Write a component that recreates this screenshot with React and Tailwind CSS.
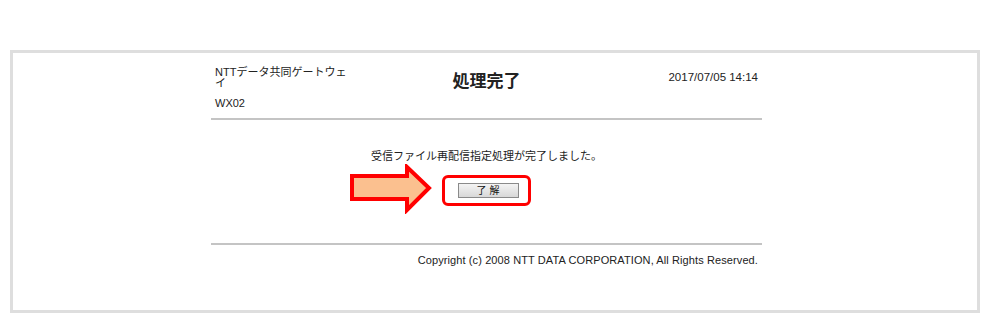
const FONT = "font-['Liberation_Sans','Noto_Sans_CJK_JP',sans-serif]";

function Arrow() {
  return (
    <svg
      width="84"
      height="50"
      viewBox="0 0 84 50"
      className="absolute left-[-95px] top-[-14px]"
    >
      <path
        d="M2 12 H57 V3 L79 24 L57 46 V35 H2 Z"
        fill="#fbc08f"
        stroke="#ff0000"
        strokeWidth="4"
        strokeLinejoin="miter"
      />
    </svg>
  );
}

export default function App() {
  return (
    <div className={`min-h-screen bg-white text-[#222] ${FONT}`}>
      <div className="pt-[50px] pl-[10px]">
        <div className="w-[970px] h-[263px] border-[3px] border-[#dedede]">
          <div className="ml-[198px] w-[551px] pt-[14px]">
            {/* header */}
            <div className="flex items-start">
              <div className="w-[180px] pl-1">
                <div className="w-[136px] text-[11px] leading-[11px]">
                  NTTデータ共同ゲートウェイ
                </div>
                <div className="mt-[9px] text-[11px] leading-[11px]">WX02</div>
              </div>
              <div className="flex-1 pt-[5px] text-center text-[17px] font-bold leading-[20px]">
                処理完了
              </div>
              <div className="w-[180px] pt-[5px] pr-1 text-right text-[11.5px] leading-[11px]">
                2017/07/05 14:14
              </div>
            </div>

            <div className="mt-[9px] h-[2px] bg-[#c4c4c4]" />

            <div className="mt-[29px] text-center text-[11px] leading-[14px]">
              受信ファイル再配信指定処理が完了しました。
            </div>

            <div className="mt-[12px] flex justify-center">
              <div className="relative flex h-[31px] w-[89px] items-center justify-center rounded-[6px] border-[3px] border-[#ff0000] pl-[3px]">
                <Arrow />
                <button className="flex h-[15px] w-[61px] items-center justify-center border border-[#8a8a8a] bg-gradient-to-b from-[#f4f4f4] to-[#d8d8d8] text-[10px] leading-none text-[#111]">
                  了 解
                </button>
              </div>
            </div>

            <div className="mt-[37px] h-[2px] bg-[#c4c4c4]" />

            <div className="mt-[9px] pr-1 text-right text-[11px] leading-[13px] tracking-[0.1px]">
              Copyright (c) 2008 NTT DATA CORPORATION, All Rights Reserved.
            </div>
          </div>
        </div>
      </div>
    </div>
  );
}
